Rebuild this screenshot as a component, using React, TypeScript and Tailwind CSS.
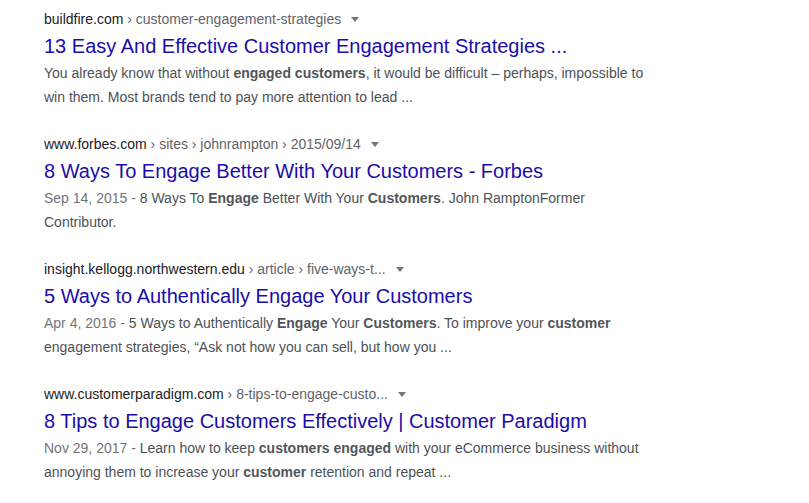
import React from "react";

type Result = {
  domain: string;
  crumbs: string;
  title: string;
  lines: React.ReactNode[];
};

const B = ({ children }: { children: React.ReactNode }) => (
  <b className="font-bold text-[#52565a]">{children}</b>
);
const D = ({ children }: { children: React.ReactNode }) => (
  <span className="text-[#70757a]">{children}</span>
);

const results: Result[] = [
  {
    domain: "buildfire.com",
    crumbs: " › customer-engagement-strategies",
    title: "13 Easy And Effective Customer Engagement Strategies ...",
    lines: [
      <>
        You already know that without <B>engaged customers</B>, it would be difficult – perhaps, impossible to
      </>,
      <>win them. Most brands tend to pay more attention to lead ...</>,
    ],
  },
  {
    domain: "www.forbes.com",
    crumbs: " › sites › johnrampton › 2015/09/14",
    title: "8 Ways To Engage Better With Your Customers - Forbes",
    lines: [
      <>
        <D>Sep 14, 2015 - </D>8 Ways To <B>Engage</B> Better With Your <B>Customers</B>. John RamptonFormer
      </>,
      <>Contributor.</>,
    ],
  },
  {
    domain: "insight.kellogg.northwestern.edu",
    crumbs: " › article › five-ways-t...",
    title: "5 Ways to Authentically Engage Your Customers",
    lines: [
      <>
        <D>Apr 4, 2016 - </D>5 Ways to Authentically <B>Engage</B> Your <B>Customers</B>. To improve your <B>customer</B>
      </>,
      <>engagement strategies, “Ask not how you can sell, but how you ...</>,
    ],
  },
  {
    domain: "www.customerparadigm.com",
    crumbs: " › 8-tips-to-engage-custo...",
    title: "8 Tips to Engage Customers Effectively | Customer Paradigm",
    lines: [
      <>
        <D>Nov 29, 2017 - </D>Learn how to keep <B>customers engaged</B> with your eCommerce business without
      </>,
      <>
        annoying them to increase your <B>customer</B> retention and repeat ...
      </>,
    ],
  },
];

export default function App() {
  return (
    <div
      className="w-[809px] h-[503px] bg-white overflow-hidden pl-[44px] pt-[8px] flex flex-col gap-[24px]"
      style={{ fontFamily: '"Liberation Sans", Arial, sans-serif' }}
    >
      {results.map((r, i) => (
        <div key={i} className="flex flex-col">
          <div className="h-[22px] flex items-center text-[14px] whitespace-nowrap">
            <span className="text-[#202124]">{r.domain}</span>
            <span className="text-[#5f6368] whitespace-pre">{r.crumbs}</span>
            <span className="ml-[10px] w-0 h-0 border-l-[4px] border-r-[4px] border-t-[5px] border-l-transparent border-r-transparent border-t-[#70757a]" />
          </div>
          <div className="mt-[3px] h-[26px] flex items-center text-[20px] text-[#1a0dab] whitespace-nowrap">
            {r.title}
          </div>
          <div className="mt-[2px] text-[14px] leading-[24px] text-[#4d5156] whitespace-nowrap">
            {r.lines.map((l, j) => (
              <div key={j}>{l}</div>
            ))}
          </div>
        </div>
      ))}
    </div>
  );
}
